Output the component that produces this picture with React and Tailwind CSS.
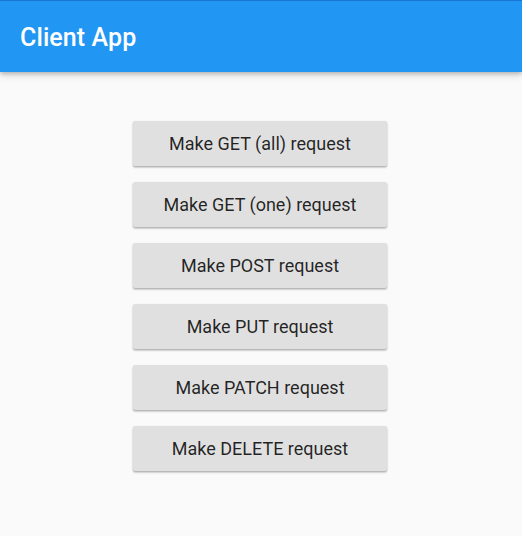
import React from 'react';

const requests = ['GET (all)', 'GET (one)', 'POST', 'PUT', 'PATCH', 'DELETE'];

export default function App() {
  return (
    <div className="w-[522px] h-[536px] bg-[#fafafa] overflow-hidden" style={{ fontFamily: 'Roboto, "Liberation Sans", sans-serif' }}>
      <header className="relative z-10 h-[72px] bg-[#2196f3] border-t border-[#1976d2] flex items-center px-5 shadow-[0_2px_4px_rgba(0,0,0,0.2),0_4px_8px_rgba(0,0,0,0.1)]">
        <h1 className="text-white text-[25px] font-medium tracking-[0.1px] pt-[3px]">Client App</h1>
      </header>

      <main className="flex flex-col items-center gap-4 pt-[49px] pr-[2px]">
        {requests.map((name) => (
          <button
            key={name}
            className="w-[254px] h-[45px] bg-[#e0e0e0] rounded-[2px] text-[18px] text-black/85 shadow-[0_1px_2px_rgba(0,0,0,0.25),0_2px_2px_rgba(0,0,0,0.1)]"
          >
            Make {name} request
          </button>
        ))}
      </main>
    </div>
  );
}
